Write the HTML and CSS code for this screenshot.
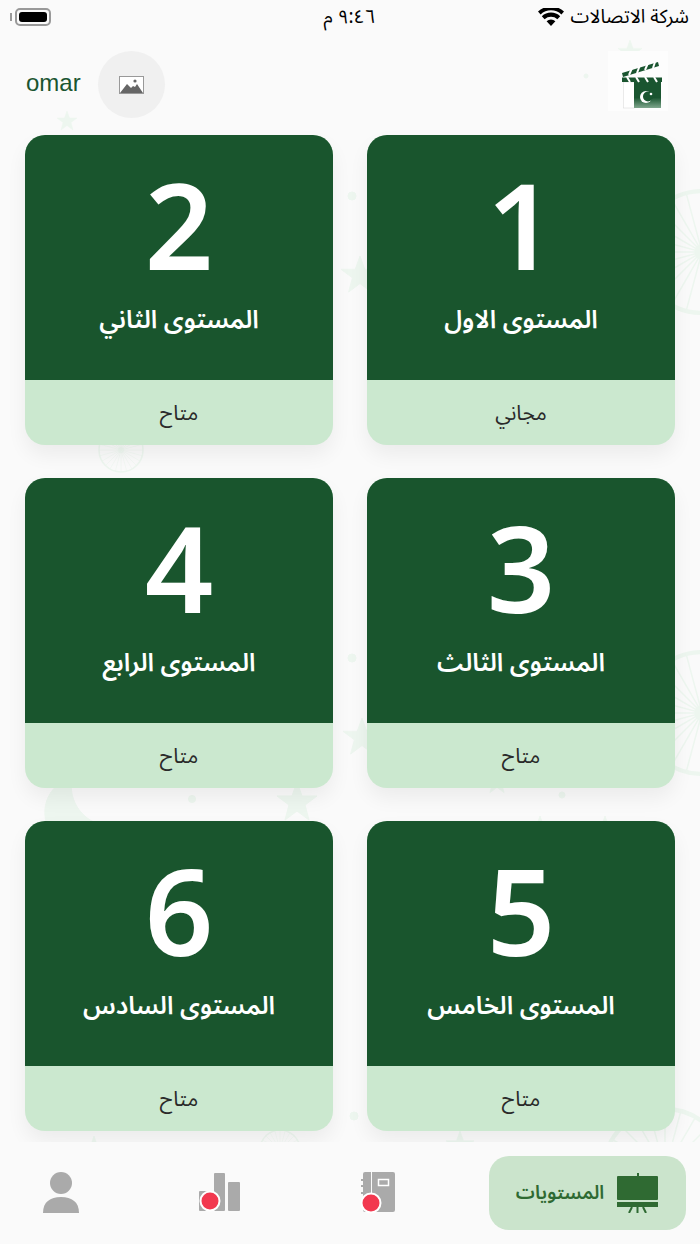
FILE: index.html
```html
<!DOCTYPE html>
<html lang="ar" dir="rtl">
<head>
    <meta charset="UTF-8">
    <meta name="viewport" content="width=device-width, initial-scale=1.0">
    <title>المستويات</title>
    <link rel="stylesheet" href="styles.css">
</head>
<body>
    <div class="screen">
        <!-- faint flag pattern behind the cards -->
        <svg class="pattern" width="700" height="1244" viewBox="0 0 700 1244" xmlns="http://www.w3.org/2000/svg">
            <defs>
                <g id="star"><path d="M0 -20 5 -6 20 -6 8 3 12 18 0 9 -12 18 -8 3 -20 -6 -5 -6Z"/></g>
                <g id="wheel" fill="none">
                    <circle r="20" stroke-width="1.4"/>
                    <circle r="2" stroke-width="1"/>
                    <path stroke-width=".5" d="M-20 0H20M0 -20V20M-19.300 -5.200 19.300 5.200M-19.300 5.200 19.300 -5.200M-17.300 -10 17.300 10M-17.300 10 17.300 -10M-14.100 -14.100 14.100 14.100M-14.100 14.100 14.100 -14.100M-10 -17.300 10 17.300M-10 17.300 10 -17.300M-5.200 -19.300 5.200 19.300M-5.200 19.300 5.200 -19.300"/>
                </g>
            </defs>
            <g fill="#edf6ef" stroke="#edf6ef">
                <use href="#star" transform="translate(67 121) scale(.5)"/>
                <use href="#star" transform="translate(630 52) scale(.6)"/>
                <use href="#star" transform="translate(360 275) scale(.95)"/>
                <use href="#star" transform="translate(362 737) scale(.95)"/>
                <use href="#star" transform="translate(297 802) scale(1)"/>
                <use href="#star" transform="translate(497 782) scale(.6)"/>
                <use href="#star" transform="translate(540 832) scale(.8)"/>
                <use href="#star" transform="translate(605 832) scale(.8)"/>
                <use href="#star" transform="translate(460 1145) scale(.7)"/>
                <use href="#star" transform="translate(94 1150) scale(.7)"/>
                <circle cx="586" cy="76" r="2"/>
                <circle cx="352" cy="196" r="4"/>
                <circle cx="352" cy="658" r="4"/>
                <circle cx="192" cy="799" r="3.500"/>
                <circle cx="562" cy="795" r="3"/>
                <circle cx="354" cy="1116" r="4"/>
                <path d="M72 778a35 35 0 1 0 40 48a40 40 0 0 1 -40 -48Z"/>
                <use href="#wheel" transform="translate(121 450) scale(1.1)"/>
                <use href="#wheel" transform="translate(702 252) scale(3.050)"/>
                <use href="#wheel" transform="translate(702 713) scale(3.050)"/>
                <use href="#wheel" transform="translate(665 1170) scale(3.050)"/>
                <use href="#wheel" transform="translate(280 1150) scale(1)"/>
            </g>
        </svg>

        <div class="status-bar">
            <div class="carrier">
                <span>شركة الاتصالات</span>
                <svg width="26" height="18" viewBox="0 0 26 18" xmlns="http://www.w3.org/2000/svg">
                    <path d="M13 18 8.600 13.200a6.400 6.400 0 0 1 8.800 0ZM6.600 11.200 3.800 8.200a13.600 13.600 0 0 1 18.400 0l-2.800 3a9.600 9.600 0 0 0 -12.800 0ZM2.600 6.400 0 3.600a19 19 0 0 1 26 0L23.400 6.400a15.400 15.400 0 0 0 -20.800 0Z" fill="#000"/>
                </svg>
            </div>
            <div class="clock">٩:٤٦ م</div>
            <div class="battery">
                <span class="battery-nub"></span>
                <span class="battery-body"><span class="battery-fill"></span></span>
            </div>
        </div>

        <header class="top-bar">
            <div class="logo-box">
                <svg width="44" height="50" viewBox="0 0 44 50" xmlns="http://www.w3.org/2000/svg">
                    <defs>
                        <linearGradient id="flag" x1="0" y1="0" x2="0" y2="1">
                            <stop offset="0.600" stop-color="#1a5530"/>
                            <stop offset="1" stop-color="#7fa68d"/>
                        </linearGradient>
                    </defs>
                    <rect x="3.500" y="22" width="11" height="26" fill="#fff" stroke="#ddd" stroke-width=".6"/>
                    <rect x="14" y="22" width="27" height="26" fill="url(#flag)"/>
                    <path d="M2 13 38 2 39 6 3 17Z" fill="#1a5530"/>
                    <path d="M9 15l3-7M17 13l3-8M25 10l3-7M33 8l2-6" stroke="#fff" stroke-width="2"/>
                    <rect x="2" y="17.500" width="40" height="4.500" fill="#1a5530"/>
                    <path d="M7 17l3 5M16 17l3 5M25 17l3 5M34 17l3 5" stroke="#fff" stroke-width="2"/>
                    <circle cx="26" cy="37" r="6" fill="#fff"/>
                    <circle cx="28" cy="36.500" r="5" fill="#1a5530"/>
                    <circle cx="31" cy="34" r="1.300" fill="#fff"/>
                </svg>
            </div>
            <div class="user">
                <div class="avatar">
                    <svg width="25" height="18" viewBox="0 0 25 18" xmlns="http://www.w3.org/2000/svg">
                        <rect x=".5" y=".5" width="24" height="17" fill="#fff" stroke="#999"/>
                        <path d="M1 17 8 8l4 4 2-2 2 1 2-3 6 9Z" fill="#666"/>
                        <circle cx="16" cy="5" r="1.600" fill="#666"/>
                    </svg>
                </div>
                <span class="user-name">omar</span>
            </div>
        </header>

        <main class="levels">
            <article class="card">
                <div class="card-top"><div class="card-num">1</div><div class="card-title">المستوى الاول</div></div>
                <div class="card-status">مجاني</div>
            </article>
            <article class="card">
                <div class="card-top"><div class="card-num">2</div><div class="card-title">المستوى الثاني</div></div>
                <div class="card-status">متاح</div>
            </article>
            <article class="card">
                <div class="card-top"><div class="card-num">3</div><div class="card-title">المستوى الثالث</div></div>
                <div class="card-status">متاح</div>
            </article>
            <article class="card">
                <div class="card-top"><div class="card-num">4</div><div class="card-title">المستوى الرابع</div></div>
                <div class="card-status">متاح</div>
            </article>
            <article class="card">
                <div class="card-top"><div class="card-num">5</div><div class="card-title">المستوى الخامس</div></div>
                <div class="card-status">متاح</div>
            </article>
            <article class="card">
                <div class="card-top"><div class="card-num">6</div><div class="card-title">المستوى السادس</div></div>
                <div class="card-status">متاح</div>
            </article>
        </main>

        <nav class="tabs">
            <div class="tab tab-active">
                <svg width="42" height="40" viewBox="0 0 42 40" xmlns="http://www.w3.org/2000/svg">
                    <path d="M20 0h2v4h-2Z" fill="#2f6a32"/>
                    <rect y="3" width="41" height="24" rx="1" fill="#2f6a32"/>
                    <rect y="29" width="41" height="5" fill="#2f6a32"/>
                    <path d="M12 40l3-6M20.500 40v-6M29 40l-3-6" stroke="#2f6a32" stroke-width="2"/>
                </svg>
                <span>المستويات</span>
            </div>
            <div class="tab">
                <svg width="40" height="44" viewBox="0 0 40 44" xmlns="http://www.w3.org/2000/svg">
                    <path d="M4 3a2 2 0 0 1 2-2h6v40H6a2 2 0 0 1-2-2Z" fill="#aaa"/>
                    <path d="M13 1h21a2 2 0 0 1 2 2v36a2 2 0 0 1-2 2H13Z" fill="#aaa"/>
                    <rect x="19.500" y="8.500" width="10" height="6" fill="none" stroke="#fff" stroke-width="1.500"/>
                    <path d="M2 9h4M2 15h4M2 22h4" stroke="#aaa" stroke-width="2"/>
                    <circle cx="12" cy="32" r="9.500" fill="#f2384f" stroke="#fff" stroke-width="2"/>
                </svg>
            </div>
            <div class="tab">
                <svg width="44" height="42" viewBox="0 0 44 42" xmlns="http://www.w3.org/2000/svg">
                    <rect x="1" y="19" width="14" height="20" rx="1" fill="#aaa"/>
                    <rect x="16" y="1" width="11" height="38" rx="1" fill="#aaa"/>
                    <rect x="30" y="10" width="12" height="29" rx="1" fill="#aaa"/>
                    <circle cx="12" cy="29" r="9.500" fill="#f2384f" stroke="#fff" stroke-width="2"/>
                </svg>
            </div>
            <div class="tab">
                <svg width="38" height="42" viewBox="0 0 38 42" xmlns="http://www.w3.org/2000/svg">
                    <ellipse cx="19" cy="11" rx="11" ry="11" fill="#aaa"/>
                    <path d="M1 41c0-11 7-16 18-16s18 5 18 16Z" fill="#aaa"/>
                </svg>
            </div>
        </nav>
    </div>
</body>
</html>
```

FILE: styles.css
```css
* {
    box-sizing: border-box;
}
body {
    margin: 0;
    font-family: "Noto Sans Arabic", "Noto Sans", "DejaVu Sans", sans-serif;
    background-color: #fafafa;
}
.screen {
    position: relative;
    width: 700px;
    height: 1244px;
    overflow: hidden;
}
.pattern {
    position: absolute;
    top: 0;
    left: 0;
}
.status-bar {
    position: relative;
    height: 34px;
    padding: 0 11px 0 10px;
    display: grid;
    grid-template-columns: 1fr auto 1fr;
    align-items: center;
    color: #000;
    font-size: 19px;
    line-height: 1;
}
.carrier {
    display: flex;
    align-items: center;
    gap: 7px;
}
.battery {
    direction: ltr;
    display: flex;
    align-items: center;
    justify-content: flex-start;
    gap: 3px;
}
.battery-nub {
    width: 2px;
    height: 8px;
    background-color: #999;
}
.battery-body {
    width: 36px;
    height: 18px;
    padding: 2px;
    border: 2px solid #999;
    border-radius: 5px;
}
.battery-fill {
    display: block;
    height: 100%;
    background-color: #000;
    border-radius: 3px;
}
.top-bar {
    position: relative;
    height: 101px;
    padding: 17px 32px 0 26px;
    display: flex;
    justify-content: space-between;
    align-items: flex-start;
}
.logo-box {
    width: 60px;
    height: 60px;
    padding: 9px 4px 0 12px;
    background-color: #fdfdfd;
}
.user {
    display: flex;
    align-items: center;
    gap: 17px;
}
.avatar {
    width: 67px;
    height: 67px;
    border-radius: 50%;
    background-color: #f0f0f0;
    display: flex;
    align-items: center;
    justify-content: center;
}
.user-name {
    margin-bottom: 3px;
    font-family: "Liberation Sans", Arial, sans-serif;
    font-size: 24px;
    color: #1a5530;
}
.levels {
    position: relative;
    padding: 0 25px;
    display: grid;
    grid-template-columns: 308px 308px;
    justify-content: space-between;
    row-gap: 33px;
}
.card {
    height: 310px;
    border-radius: 20px;
    overflow: hidden;
    background-color: #cbe8cf;
    box-shadow: 0 10px 20px rgba(0, 0, 0, 0.06);
    display: flex;
    flex-direction: column;
}
.card-top {
    height: 245px;
    padding-top: 24px;
    background-color: #19552d;
    color: #fff;
    text-align: center;
}
.card-num {
    height: 130px;
    font-family: "Noto Sans", sans-serif;
    font-size: 120px;
    font-weight: 600;
    line-height: 130px;
}
.card-title {
    margin-top: 13px;
    font-size: 25px;
    font-weight: 600;
    line-height: 36px;
}
.card-status {
    flex: 1;
    display: flex;
    align-items: center;
    justify-content: center;
    font-size: 21px;
    color: #2a2a2a;
}
.tabs {
    position: absolute;
    left: 0;
    right: 0;
    bottom: 0;
    height: 102px;
    padding: 14px 14px 0 0;
    background-color: #fafafa;
    display: flex;
    align-items: flex-start;
    gap: 37px;
}
.tab {
    flex: 0 0 122px;
    height: 74px;
    display: flex;
    align-items: center;
    justify-content: center;
}
.tab-active {
    flex: 0 0 197px;
    margin-left: 12px;
    gap: 13px;
    background-color: #cbe4cc;
    border-radius: 20px;
    font-size: 19px;
    font-weight: 600;
    color: #2f6a32;
}
```
